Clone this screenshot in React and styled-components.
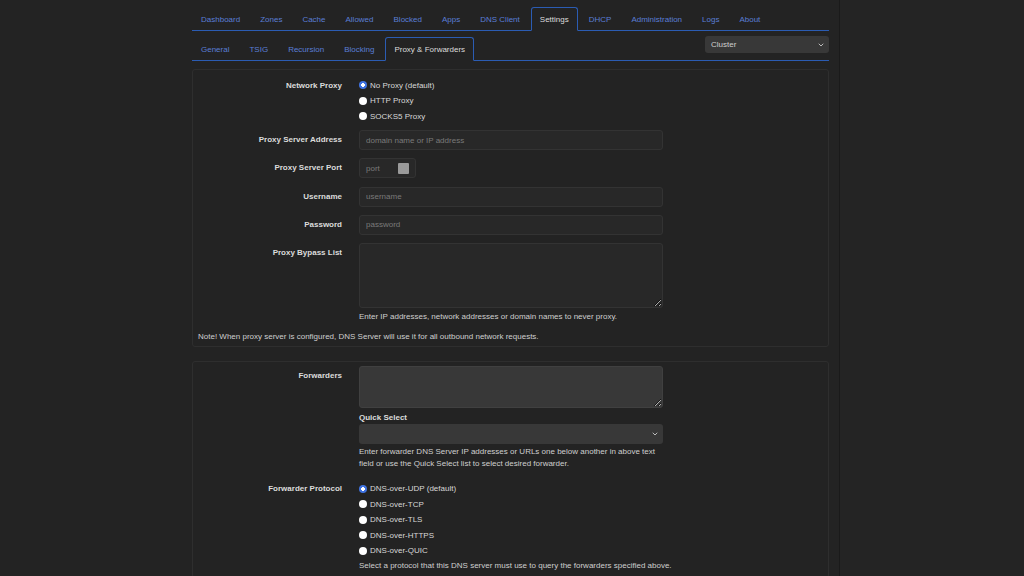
import React from "react";
import styled, { createGlobalStyle } from "styled-components";
import { ChevronDown } from "lucide-react";

const GlobalStyle = createGlobalStyle`
  * { box-sizing: border-box; }
  body {
    margin: 0;
    background: #232323;
    font-family: "Liberation Sans", Arial, sans-serif;
    font-size: 8px;
    color: #d8d8d8;
  }
`;

const Page = styled.div`
  display: flex;
  min-height: 576px;
`;

const Main = styled.main`
  width: 840px;
  padding-top: 7px;
  border-right: 1px solid #1a1a1a;
`;

const Side = styled.aside`
  flex: 1;
  background: #242424;
`;

const Container = styled.div`
  margin-left: 192px;
  width: 637px;
`;

const TabBar = styled.ul`
  display: flex;
  align-items: flex-start;
  list-style: none;
  margin: ${(p) => (p.$sub ? "6px 0 0" : "0")};
  padding: 0;
  border-bottom: 1px solid #2b5cb3;
`;

const TabItem = styled.li`
  margin-right: 2px;
  margin-bottom: -1px;
`;

const TabLink = styled.a`
  display: block;
  height: 24px;
  line-height: 23px;
  padding: 0 8px;
  border: 1px solid ${(p) => (p.$active ? "#2b5cb3" : "transparent")};
  border-bottom-color: ${(p) => (p.$active ? "#232323" : "transparent")};
  border-radius: 3px 3px 0 0;
  color: ${(p) => (p.$active ? "#dcdcdc" : "#5a7ed6")};
  white-space: nowrap;
  cursor: pointer;
`;

const Spacer = styled.li`
  flex: 1;
`;

const NodeSelect = styled.div`
  display: flex;
  align-items: center;
  justify-content: space-between;
  width: 124px;
  height: 17px;
  margin-top: -1px;
  padding: 0 4px 0 6px;
  background: #383838;
  border-radius: 3px;
  color: #cfcfcf;
`;

const Panel = styled.section`
  margin-top: ${(p) => p.$top || 8}px;
  border: 1px solid #2e2e2e;
  border-radius: 3px;
  padding: ${(p) => (p.$top ? "4px 0 5px" : "4px 0 3px")};
`;

const Row = styled.div`
  display: grid;
  grid-template-columns: 149px 304px;
  column-gap: 17px;
  align-items: start;
  margin-top: ${(p) => p.$mt || 0}px;
`;

const Label = styled.label`
  text-align: right;
  font-weight: bold;
  color: #dcdcdc;
  line-height: ${(p) => p.$lh || 20}px;
  white-space: nowrap;
`;

const Field = styled.div`
  display: flex;
  flex-direction: column;
`;

const RadioItem = styled.label`
  display: flex;
  align-items: center;
  gap: 3px;
  height: 15.5px;
  color: #d8d8d8;
`;

const Radio = styled.input.attrs({ type: "radio" })`
  appearance: none;
  margin: 0;
  width: 8px;
  height: 8px;
  border-radius: 50%;
  background: #ffffff;
  border: none;
  &:checked {
    background: radial-gradient(circle, #ffffff 0 1.6px, #3f72e0 2.1px);
  }
`;

const TextInput = styled.input`
  width: 304px;
  height: 20px;
  padding: 0 6px;
  background: ${(p) => (p.disabled ? "#282828" : "#383838")};
  border: 1px solid ${(p) => (p.disabled ? "#333333" : "#404040")};
  border-radius: 3px;
  font: inherit;
  color: #d8d8d8;
  outline: none;
  &::placeholder {
    color: #7a7a7a;
  }
`;

const PortBox = styled.div`
  display: flex;
  align-items: center;
  width: 57px;
  height: 20px;
  padding: 0 6px;
  background: #282828;
  border: 1px solid #333333;
  border-radius: 3px;
  color: #7a7a7a;
`;

const PortText = styled.span`
  flex: 1;
`;

const Spinner = styled.span`
  width: 11px;
  height: 11px;
  background: #9a9a9a;
  border-radius: 1px;
`;

const TextArea = styled.textarea`
  display: block;
  width: 304px;
  height: ${(p) => p.$h}px;
  margin: 0;
  padding: 3px 6px;
  background: ${(p) => (p.disabled ? "#282828" : "#383838")};
  border: 1px solid ${(p) => (p.disabled ? "#333333" : "#404040")};
  border-radius: 3px;
  font: inherit;
  color: #d8d8d8;
  resize: vertical;
  outline: none;
`;

const SubLabel = styled.div`
  font-weight: bold;
  color: #dcdcdc;
  line-height: 11px;
  margin: 4px 0 1px;
`;

const SelectBox = styled.div`
  display: flex;
  align-items: center;
  justify-content: flex-end;
  width: 304px;
  height: 20px;
  padding: 0 4px;
  background: #383838;
  border-radius: 3px;
  color: #cfcfcf;
`;

const Help = styled.p`
  width: ${(p) => p.$w || 304}px;
  margin: ${(p) => p.$mt || 2}px 0 0;
  line-height: 12px;
  color: #cfcfcf;
`;

const Note = styled.p`
  margin: 8px 0 0 5px;
  line-height: 12px;
  color: #cfcfcf;
`;

const topTabs = [
  "Dashboard",
  "Zones",
  "Cache",
  "Allowed",
  "Blocked",
  "Apps",
  "DNS Client",
  "Settings",
  "DHCP",
  "Administration",
  "Logs",
  "About",
];

const subTabs = ["General", "TSIG", "Recursion", "Blocking", "Proxy & Forwarders"];

const proxyTypes = ["No Proxy (default)", "HTTP Proxy", "SOCKS5 Proxy"];

const protocols = [
  "DNS-over-UDP (default)",
  "DNS-over-TCP",
  "DNS-over-TLS",
  "DNS-over-HTTPS",
  "DNS-over-QUIC",
];

const RadioGroup = ({ name, items }) => (
  <Field>
    {items.map((item, i) => (
      <RadioItem key={item}>
        <Radio name={name} defaultChecked={i === 0} />
        {item}
      </RadioItem>
    ))}
  </Field>
);

export default function App() {
  return (
    <Page>
      <GlobalStyle />
      <Main>
        <Container>
          <TabBar>
            {topTabs.map((t) => (
              <TabItem key={t}>
                <TabLink $active={t === "Settings"}>{t}</TabLink>
              </TabItem>
            ))}
          </TabBar>

          <TabBar $sub>
            {subTabs.map((t) => (
              <TabItem key={t}>
                <TabLink $active={t === "Proxy & Forwarders"}>{t}</TabLink>
              </TabItem>
            ))}
            <Spacer />
            <li>
              <NodeSelect>
                Cluster
                <ChevronDown size={8} strokeWidth={3} color="#bbbbbb" />
              </NodeSelect>
            </li>
          </TabBar>

          <Panel>
            <Row $mt={3.5}>
              <Label $lh={15.5}>Network Proxy</Label>
              <RadioGroup name="proxy" items={proxyTypes} />
            </Row>
            <Row $mt={6}>
              <Label>Proxy Server Address</Label>
              <TextInput disabled placeholder="domain name or IP address" />
            </Row>
            <Row $mt={8.3}>
              <Label>Proxy Server Port</Label>
              <PortBox>
                <PortText>port</PortText>
                <Spinner />
              </PortBox>
            </Row>
            <Row $mt={8.3}>
              <Label>Username</Label>
              <TextInput disabled placeholder="username" />
            </Row>
            <Row $mt={8.3}>
              <Label>Password</Label>
              <TextInput disabled placeholder="password" />
            </Row>
            <Row $mt={8.3}>
              <Label>Proxy Bypass List</Label>
              <Field>
                <TextArea disabled $h={65} />
                <Help $mt={3}>
                  Enter IP addresses, network addresses or domain names to never proxy.
                </Help>
              </Field>
            </Row>
            <Note>
              Note! When proxy server is configured, DNS Server will use it for all
              outbound network requests.
            </Note>
          </Panel>

          <Panel $top={14}>
            <Row>
              <Label>Forwarders</Label>
              <Field>
                <TextArea $h={42} />
                <SubLabel>Quick Select</SubLabel>
                <SelectBox>
                  <ChevronDown size={8} strokeWidth={3} color="#bbbbbb" />
                </SelectBox>
                <Help>
                  Enter forwarder DNS Server IP addresses or URLs one below another in
                  above text field or use the Quick Select list to select desired
                  forwarder.
                </Help>
              </Field>
            </Row>
            <Row $mt={11}>
              <Label $lh={15.5}>Forwarder Protocol</Label>
              <Field>
                <RadioGroup name="protocol" items={protocols} />
                <Help $mt={1} $w={330}>
                  Select a protocol that this DNS server must use to query the
                  forwarders specified above.
                </Help>
              </Field>
            </Row>
          </Panel>
        </Container>
      </Main>
      <Side />
    </Page>
  );
}
